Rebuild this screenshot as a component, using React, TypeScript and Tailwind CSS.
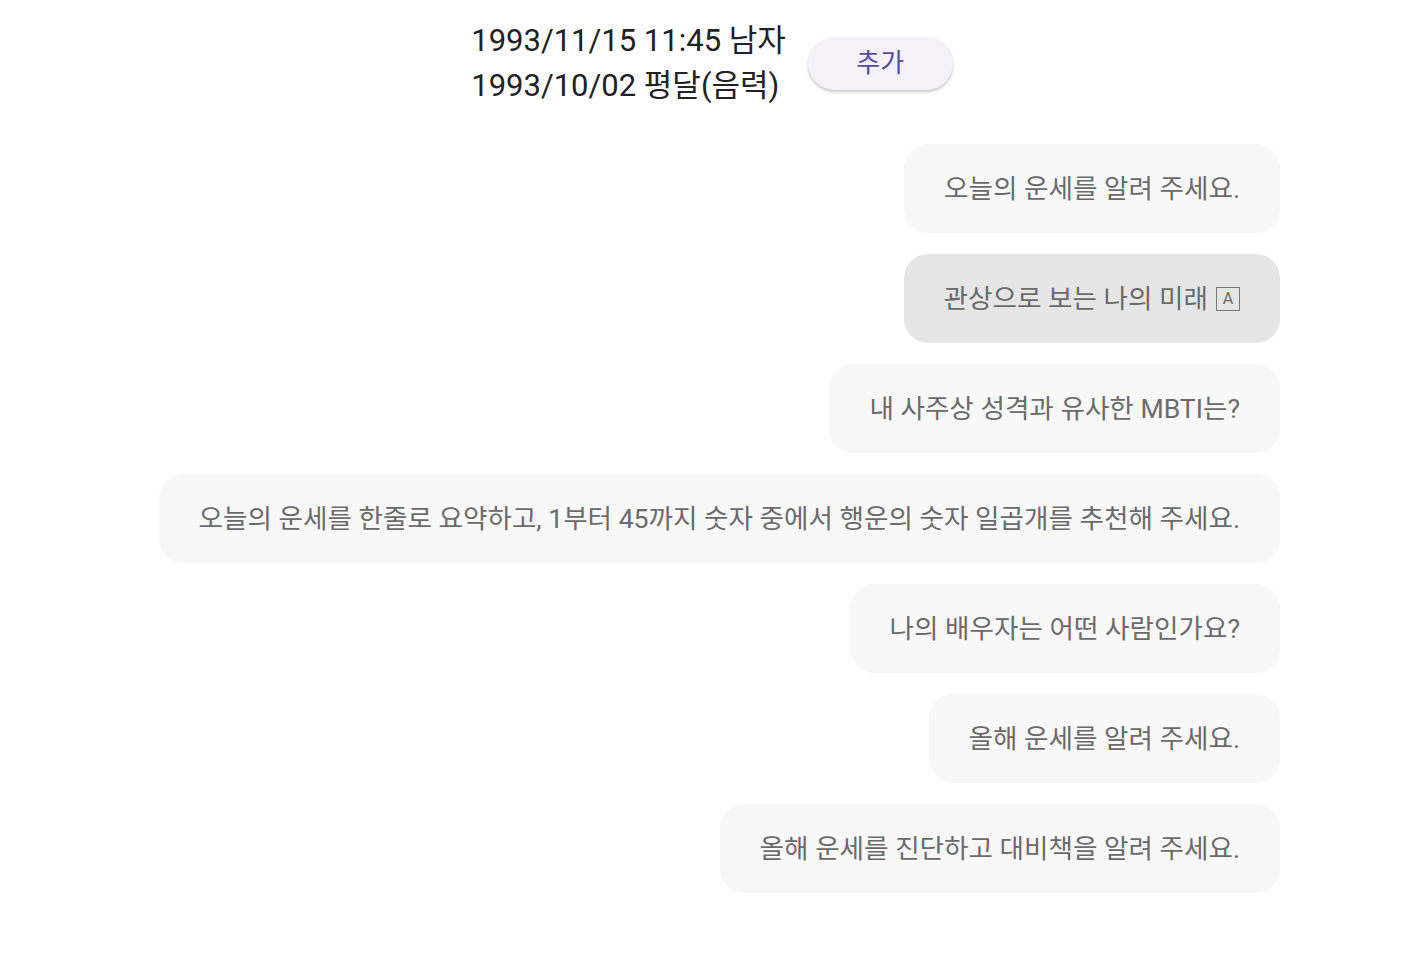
const font = { fontFamily: 'Roboto, "Noto Sans CJK KR", sans-serif' }

const questions = [
  { text: "오늘의 운세를 알려 주세요.", pressed: false },
  { text: "관상으로 보는 나의 미래 🅰", pressed: true },
  { text: "내 사주상 성격과 유사한 MBTI는?", pressed: false },
  {
    text: "오늘의 운세를 한줄로 요약하고, 1부터 45까지 숫자 중에서 행운의 숫자 일곱개를 추천해 주세요.",
    pressed: false,
  },
  { text: "나의 배우자는 어떤 사람인가요?", pressed: false },
  { text: "올해 운세를 알려 주세요.", pressed: false },
  { text: "올해 운세를 진단하고 대비책을 알려 주세요.", pressed: false },
]

function QuestionBubble({ text, pressed }: { text: string; pressed: boolean }) {
  const hasBadge = text.endsWith("🅰")
  const label = hasBadge ? text.slice(0, -2).trim() : text
  return (
    <button
      className={
        "h-[89px] px-10 rounded-[24px] flex items-center text-[26.6px] text-[#6a6a6a] " +
        (pressed ? "bg-[#e6e6e6]" : "bg-[#f8f8f8]")
      }
    >
      <span>{label}</span>
      {hasBadge && (
        <span className="ml-2 inline-flex items-center justify-center w-[24px] h-[24px] border border-[#777] text-[16px] leading-none text-[#666]">
          A
        </span>
      )}
    </button>
  )
}

export default function App() {
  return (
    <div className="min-h-[960px] bg-white" style={font}>
      <header className="flex items-center justify-center gap-[22px] pt-[18px]">
        <div className="text-[31px] leading-[45px] text-[#222222]">
          <div>1993/11/15 11:45 남자</div>
          <div>1993/10/02 평달(음력)</div>
        </div>
        <button className="w-[145px] h-[53px] rounded-full bg-[#f4f1fa] text-[#5b4b9e] text-[26px] shadow-[0_2px_3px_rgba(0,0,0,0.22)]">
          추가
        </button>
      </header>

      <div className="flex flex-col items-end gap-[21px] px-[144px] mt-[36px]">
        {questions.map((q) => (
          <QuestionBubble key={q.text} text={q.text} pressed={q.pressed} />
        ))}
      </div>
    </div>
  )
}
